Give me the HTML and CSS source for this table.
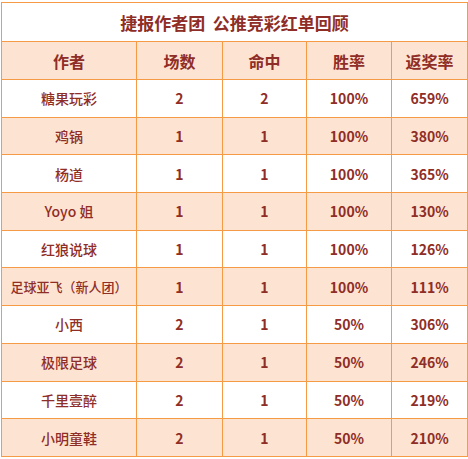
FILE: index.html
```html
<!DOCTYPE html>
<html lang="zh-CN">
<head>
<meta charset="utf-8">
<title>捷报作者团 公推竞彩红单回顾</title>
<link rel="stylesheet" href="styles.css">
</head>
<body>
<table class="board">
  <colgroup>
    <col class="c-author"><col class="c-games"><col class="c-hits"><col class="c-rate"><col class="c-return">
  </colgroup>
  <tr class="title-row"><th colspan="5">捷报作者团&nbsp;&nbsp;公推竞彩红单回顾</th></tr>
  <tr class="head-row"><th>作者</th><th>场数</th><th>命中</th><th>胜率</th><th>返奖率</th></tr>
  <tr class="row"><td class="name">糖果玩彩</td><td>2</td><td>2</td><td>100%</td><td>659%</td></tr>
  <tr class="row alt"><td class="name">鸡锅</td><td>1</td><td>1</td><td>100%</td><td>380%</td></tr>
  <tr class="row"><td class="name">杨道</td><td>1</td><td>1</td><td>100%</td><td>365%</td></tr>
  <tr class="row alt"><td class="name">Yoyo 姐</td><td>1</td><td>1</td><td>100%</td><td>130%</td></tr>
  <tr class="row"><td class="name">红狼说球</td><td>1</td><td>1</td><td>100%</td><td>126%</td></tr>
  <tr class="row alt"><td class="name long">足球亚飞（新人团）</td><td>1</td><td>1</td><td>100%</td><td>111%</td></tr>
  <tr class="row"><td class="name">小西</td><td>2</td><td>1</td><td>50%</td><td>306%</td></tr>
  <tr class="row alt"><td class="name">极限足球</td><td>2</td><td>1</td><td>50%</td><td>246%</td></tr>
  <tr class="row"><td class="name">千里壹醉</td><td>2</td><td>1</td><td>50%</td><td>219%</td></tr>
  <tr class="row alt"><td class="name">小明童鞋</td><td>2</td><td>1</td><td>50%</td><td>210%</td></tr>
</table>
</body>
</html>
```
FILE: styles.css
```css
html, body {
  margin: 0;
  padding: 0;
  background: #ffffff;
}
body {
  padding: 2px 0 0 1px;
  font-family: "Noto Sans CJK SC", "Noto Sans", sans-serif;
  color: #8f2d27;
}
.board {
  border-collapse: collapse;
  table-layout: fixed;
  width: 466px;
}
.c-author { width: 135px; }
.c-games { width: 86px; }
.c-hits { width: 84px; }
.c-rate { width: 85px; }
.c-return { width: 76px; }
.board th, .board td {
  border: 1px solid #f59a45;
  text-align: center;
  padding: 0;
  font-weight: 700;
}
.title-row th {
  height: 38px;
  font-size: 17px;
  background: #ffffff;
}
.head-row th {
  height: 37px;
  font-size: 16px;
  background: #fde4d2;
}
.row td {
  height: 36.7px;
  font-size: 14px;
  background: #ffffff;
}
.row.alt td {
  background: #fde4d2;
}
.row td.name {
  font-weight: 500;
}
.row td.long {
  font-size: 13px;
}
```
